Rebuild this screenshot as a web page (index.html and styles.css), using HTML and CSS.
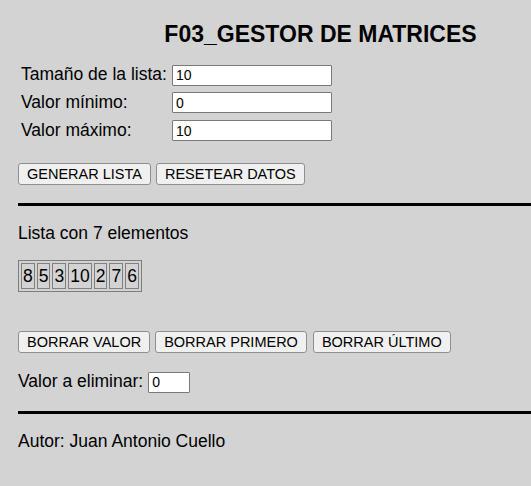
FILE: index.html
```html
<!DOCTYPE html>
<html lang="es">
<head>
<meta charset="utf-8">
<title>F03_GESTOR DE MATRICES</title>
<link rel="stylesheet" href="styles.css">
</head>
<body>
<div class="page">
  <h1 class="title">F03_GESTOR DE MATRICES</h1>

  <div class="form">
    <label class="lbl">Tamaño de la lista:</label>
    <input class="field" type="text" value="10">
    <label class="lbl">Valor mínimo:</label>
    <input class="field" type="text" value="0">
    <label class="lbl">Valor máximo:</label>
    <input class="field" type="text" value="10">
  </div>

  <div class="buttons buttons-top">
    <button class="btn">GENERAR LISTA</button>
    <button class="btn">RESETEAR DATOS</button>
  </div>

  <hr class="rule rule-1">

  <p class="count">Lista con 7 elementos</p>

  <table class="list">
    <tr>
      <td>8</td><td>5</td><td>3</td><td>10</td><td>2</td><td>7</td><td>6</td>
    </tr>
  </table>

  <div class="buttons buttons-del">
    <button class="btn">BORRAR VALOR</button>
    <button class="btn">BORRAR PRIMERO</button>
    <button class="btn btn-last">BORRAR ÚLTIMO</button>
  </div>

  <div class="remove">
    <label class="lbl">Valor a eliminar:</label>
    <input class="field field-small" type="text" value="0">
  </div>

  <hr class="rule rule-2">

  <p class="author">Autor: Juan Antonio Cuello</p>
</div>
</body>
</html>
```

FILE: styles.css
```css
html, body {
  margin: 0;
  padding: 0;
  background: #d3d3d3;
}

body {
  font-family: "Liberation Sans", Arial, Helvetica, sans-serif;
  font-size: 17.5px;
  color: #000;
}

.page {
  padding: 20.5px 0 0 18px;
}

.title {
  margin: 0;
  padding-left: 92px;
  font-size: 23px;
  font-weight: bold;
  text-align: center;
  line-height: normal;
}

.form {
  display: grid;
  grid-template-columns: 151px 160px;
  row-gap: 6.8px;
  margin: 17px 0 0 3px;
  align-items: center;
}

.lbl {
  line-height: 19.5px;
}

.field {
  box-sizing: border-box;
  height: 21px;
  width: 160px;
  margin: 0;
  padding: 0 3px;
  border: 1px solid #7a7a7a;
  border-radius: 1px;
  background: #fff;
  font-family: "Liberation Sans", Arial, Helvetica, sans-serif;
  font-size: 14px;
  color: #000;
}

.field-small {
  width: 42px;
}

.buttons {
  display: flex;
  gap: 5px;
}

.buttons-top {
  margin-top: 22.4px;
}

.btn {
  box-sizing: border-box;
  height: 21.5px;
  margin: 0;
  padding: 0 8px;
  border: 1px solid #8f8f8f;
  border-radius: 3px;
  background: #f0f0f0;
  font-family: "Liberation Sans", Arial, Helvetica, sans-serif;
  font-size: 14.5px;
  color: #000;
  line-height: 1;
}

.btn-last {
  margin-left: 1px;
}

.rule {
  height: 0;
  margin: 0;
  border: 0;
  border-top: 3px solid #000;
}

.rule-1 {
  margin-top: 18px;
}

.count {
  margin: 18px 0 0;
  line-height: 19.5px;
}

.list {
  margin-top: 16.7px;
  border-collapse: separate;
  border-spacing: 2px;
  border: 1px solid #7d7d7d;
}

.list td {
  padding: 2px 1px;
  border: 1px solid #808080;
  line-height: 20px;
  font-size: 17.5px;
}

.buttons-del {
  margin-top: 39px;
}

.remove {
  display: flex;
  align-items: center;
  gap: 5px;
  margin-top: 19px;
}

.rule-2 {
  margin-top: 18.7px;
}

.author {
  margin: 17.4px 0 0;
  line-height: 19.5px;
}
```
